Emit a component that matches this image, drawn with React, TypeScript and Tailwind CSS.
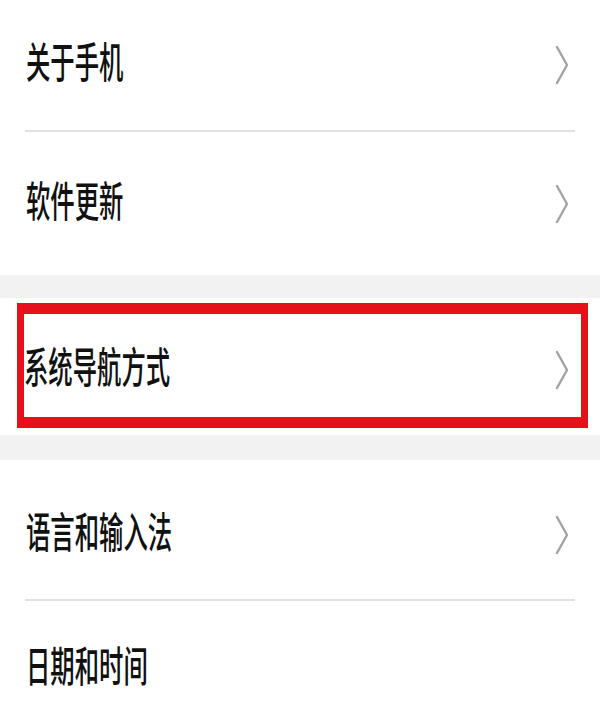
import React from "react";

const Chevron: React.FC = () => (
  <svg width="14" height="40" viewBox="0 0 14 40" fill="none">
    <polyline
      points="2,2 12,20 2,38"
      stroke="#a3a3a3"
      strokeWidth="2.4"
      strokeLinecap="round"
      strokeLinejoin="round"
    />
  </svg>
);

const Label: React.FC<{ text: string }> = ({ text }) => (
  <span className="block mb-[10px] origin-left scale-x-[0.58] whitespace-nowrap text-[42px] font-medium leading-none text-[#111111]">
    {text}
  </span>
);

const App: React.FC = () => {
  return (
    <div className="w-[600px] h-[720px] overflow-hidden bg-white font-['Noto_Sans_CJK_SC','Noto_Sans',sans-serif]">
      {/* 关于手机 */}
      <div className="h-[130px] flex items-center justify-between pl-[26px] pr-[31px]">
        <Label text="关于手机" />
        <Chevron />
      </div>
      <div className="mx-[25px] h-[2px] bg-[#e2e2e2]" />

      {/* 软件更新 */}
      <div className="h-[143px] flex items-center justify-between pl-[26px] pr-[31px]">
        <Label text="软件更新" />
        <Chevron />
      </div>

      <div className="h-[23px] bg-[#f2f2f2]" />

      {/* 系统导航方式 */}
      <div className="h-[137px] pl-[17px] pr-[12px] pt-[5px] pb-[7px]">
        <div className="h-full flex items-center justify-between border-x-[7px] border-y-[11px] border-[#e5101a] pr-[12px] pt-[8px]">
          <Label text="系统导航方式" />
          <Chevron />
        </div>
      </div>

      <div className="h-[25px] bg-[#f2f2f2]" />

      {/* 语言和输入法 */}
      <div className="h-[139px] flex items-center justify-between pl-[26px] pr-[31px] pt-[10px]">
        <Label text="语言和输入法" />
        <Chevron />
      </div>
      <div className="mx-[25px] h-[2px] bg-[#e2e2e2]" />

      {/* 日期和时间 */}
      <div className="h-[119px] flex items-center pl-[26px] pt-[16px]">
        <Label text="日期和时间" />
      </div>
    </div>
  );
};

export default App;
